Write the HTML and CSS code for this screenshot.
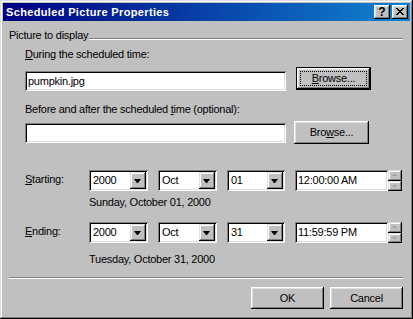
FILE: index.html
```html
<!DOCTYPE html>
<html>
<head>
<meta charset="utf-8">
<link rel="stylesheet" href="styles.css">
</head>
<body>
<div class="window">
  <div class="titlebar">
    <span class="title">Scheduled Picture Properties</span>
    <div class="tb-buttons">
      <span class="tb-btn help">?</span>
      <span class="tb-btn close">
        <svg width="8" height="7" viewBox="0 0 8 7"><path d="M0 0h2v1H0z M6 0h2v1H6z M1 1h2v1H1z M5 1h2v1H5z M2 2h2v1H2z M4 2h2v1H4z M3 3h2v1H3z M2 4h2v1H2z M4 4h2v1H4z M1 5h2v1H1z M5 5h2v1H5z M0 6h2v1H0z M6 6h2v1H6z" fill="#000"/></svg>
      </span>
    </div>
  </div>
  <div class="content">
    <div class="group-head"><span>Picture to display</span><span class="etch"></span></div>
    <div class="indent">
      <div class="label l-during"><u>D</u>uring the scheduled time:</div>
      <div class="file-row r1">
        <div class="textbox tb1">pumpkin.jpg</div>
        <div class="btn default"><span class="focus"><u>B</u>rowse...</span></div>
      </div>
      <div class="label l-before">Before and after the scheduled <u>t</u>ime (optional):</div>
      <div class="file-row r2">
        <div class="textbox tb2"></div>
        <div class="btn">Bro<u>w</u>se...</div>
      </div>
    </div>

    <div class="date-row start">
      <div class="row-label"><u>S</u>tarting:</div>
      <div class="combo"><span class="val">2000</span><span class="drop"><i class="tri"></i></span></div>
      <div class="combo"><span class="val">Oct</span><span class="drop"><i class="tri"></i></span></div>
      <div class="combo"><span class="val">01</span><span class="drop"><i class="tri"></i></span></div>
      <div class="timebox">
        <div class="time">12:00:00 AM</div>
        <div class="spin"><span class="up"><i class="arr-up"></i></span><span class="down"><i class="arr-down"></i></span></div>
      </div>
    </div>
    <div class="date-text d-start">Sunday, October 01, 2000</div>

    <div class="date-row end">
      <div class="row-label"><u>E</u>nding:</div>
      <div class="combo"><span class="val">2000</span><span class="drop"><i class="tri"></i></span></div>
      <div class="combo"><span class="val">Oct</span><span class="drop"><i class="tri"></i></span></div>
      <div class="combo"><span class="val">31</span><span class="drop"><i class="tri"></i></span></div>
      <div class="timebox">
        <div class="time">11:59:59 PM</div>
        <div class="spin"><span class="up"><i class="arr-up"></i></span><span class="down"><i class="arr-down"></i></span></div>
      </div>
    </div>
    <div class="date-text d-end">Tuesday, October 31, 2000</div>

    <div class="separator"></div>
    <div class="actions">
      <div class="btn action">OK</div>
      <div class="btn action">Cancel</div>
    </div>
  </div>
</div>
</body>
</html>
```
FILE: styles.css
```css
html, body {
  margin: 0;
  padding: 0;
  background: #c0c0c0;
}
body {
  font-family: "Liberation Sans", Arial, sans-serif;
  font-size: 11px;
  line-height: 13px;
  letter-spacing: -0.25px;
  color: #000;
}
u {
  text-underline-offset: 1px;
}
.window {
  width: 413px;
  height: 319px;
  box-sizing: border-box;
  padding: 3px;
  background: #c0c0c0;
  box-shadow: inset -1px -1px #000, inset 1px 1px #dfdfdf, inset -2px -2px #808080, inset 2px 2px #fff;
  display: flex;
  flex-direction: column;
}
.titlebar {
  height: 18px;
  display: flex;
  align-items: center;
  padding: 0 2px 0 3px;
  background: linear-gradient(90deg, #000080, #1084d0);
  color: #fff;
  font-weight: bold;
}
.title {
  letter-spacing: 0.35px;
}
.tb-buttons {
  margin-left: auto;
  display: flex;
  gap: 2px;
}
.tb-btn {
  width: 16px;
  height: 14px;
  box-sizing: border-box;
  background: #c0c0c0;
  box-shadow: inset -1px -1px #000, inset 1px 1px #fff, inset -2px -2px #808080, inset 2px 2px #dfdfdf;
  display: flex;
  align-items: center;
  justify-content: center;
  color: #000;
  font-size: 12px;
  font-weight: bold;
  line-height: 12px;
  letter-spacing: 0;
}
.tb-btn.help {
  padding-bottom: 1px;
}
.tb-btn.close svg {
  display: block;
  margin-top: -1px;
}
.content {
  flex: 1;
  display: flex;
  flex-direction: column;
  padding: 0 7px 0 6px;
}
.group-head {
  margin-top: 8px;
  display: flex;
  align-items: flex-start;
}
.etch {
  flex: 1;
  height: 0;
  margin-top: 9px;
  margin-left: 1px;
  border-top: 1px solid #808080;
  border-bottom: 1px solid #fff;
}
.indent {
  padding-left: 16px;
}
.l-during {
  margin-top: 6px;
}
.file-row {
  display: flex;
  align-items: flex-start;
}
.r1 {
  margin-top: 6px;
}
.l-before {
  margin-top: 12px;
}
.r2 {
  margin-top: 5px;
}
.textbox {
  width: 261px;
  height: 20px;
  box-sizing: border-box;
  padding: 2px 2px 2px 3px;
  line-height: 16px;
  background: #fff;
  box-shadow: inset 1px 1px #808080, inset -1px -1px #fff, inset 2px 2px #000, inset -2px -2px #dfdfdf;
}
.tb1 {
  margin-top: 4px;
}
.tb2 {
  margin-top: 2px;
}
.btn {
  width: 75px;
  height: 23px;
  box-sizing: border-box;
  background: #c0c0c0;
  box-shadow: inset -1px -1px #000, inset 1px 1px #fff, inset -2px -2px #808080, inset 2px 2px #dfdfdf;
  display: flex;
  align-items: center;
  justify-content: center;
}
.r1 .btn {
  margin-left: 10px;
}
.r2 .btn {
  margin-left: 8px;
}
.btn.default {
  padding: 4px;
  box-shadow: inset 0 0 0 1px #000, inset -2px -2px #000, inset 2px 2px #fff, inset -3px -3px #808080, inset 3px 3px #dfdfdf;
}
.focus {
  flex: 1;
  align-self: stretch;
  border: 1px dotted #000;
  display: flex;
  align-items: center;
  justify-content: center;
}
.date-row {
  display: grid;
  grid-template-columns: 70px 59px 59px 58px 107px;
  column-gap: 10px;
  align-items: start;
}
.date-row.start {
  margin-top: 26px;
}
.date-row.end {
  margin-top: 13px;
}
.row-label {
  padding-left: 16px;
  margin-top: 3px;
}
.combo {
  height: 21px;
  box-sizing: border-box;
  padding: 2px;
  display: flex;
  background: #fff;
  box-shadow: inset 1px 1px #808080, inset -1px -1px #fff, inset 2px 2px #000, inset -2px -2px #dfdfdf;
}
.combo .val {
  flex: 1;
  padding-left: 2px;
  line-height: 17px;
}
.drop {
  width: 16px;
  box-sizing: border-box;
  background: #c0c0c0;
  box-shadow: inset -1px -1px #000, inset 1px 1px #dfdfdf, inset -2px -2px #808080, inset 2px 2px #fff;
  display: flex;
  align-items: center;
  justify-content: center;
}
.tri {
  display: block;
  width: 1px;
  height: 0;
  border-left: 3px solid transparent;
  border-right: 3px solid transparent;
  border-top: 4px solid #000;
  margin-left: -1px;
}
.timebox {
  display: flex;
  height: 21px;
}
.time {
  flex: 1;
  box-sizing: border-box;
  padding: 2px 2px 2px 3px;
  line-height: 17px;
  background: #fff;
  box-shadow: inset 1px 1px #808080, inset -1px -1px #fff, inset 2px 2px #000, inset -2px -2px #dfdfdf;
}
.spin {
  width: 14px;
  display: flex;
  flex-direction: column;
}
.spin span {
  flex: 1;
  box-sizing: border-box;
  background: #c0c0c0;
  box-shadow: inset -1px -1px #000, inset 1px 1px #dfdfdf, inset -2px -2px #808080, inset 2px 2px #fff;
  display: flex;
  align-items: center;
  justify-content: center;
}
.arr-up {
  display: block;
  width: 1px;
  height: 0;
  border-left: 2px solid transparent;
  border-right: 2px solid transparent;
  border-bottom: 2px solid #a0a0a0;
  margin-left: -1px;
}
.arr-down {
  display: block;
  width: 1px;
  height: 0;
  border-left: 2px solid transparent;
  border-right: 2px solid transparent;
  border-top: 2px solid #a0a0a0;
  margin-left: -1px;
}
.date-text {
  padding-left: 80px;
}
.d-start {
  margin-top: 5px;
}
.d-end {
  margin-top: 10px;
}
.separator {
  margin-top: 11px;
  height: 0;
  border-top: 1px solid #808080;
  border-bottom: 1px solid #fff;
}
.actions {
  margin-top: 8px;
  display: flex;
  justify-content: flex-end;
  gap: 6px;
}
.btn.action {
  width: 73px;
  height: 22px;
}
```
